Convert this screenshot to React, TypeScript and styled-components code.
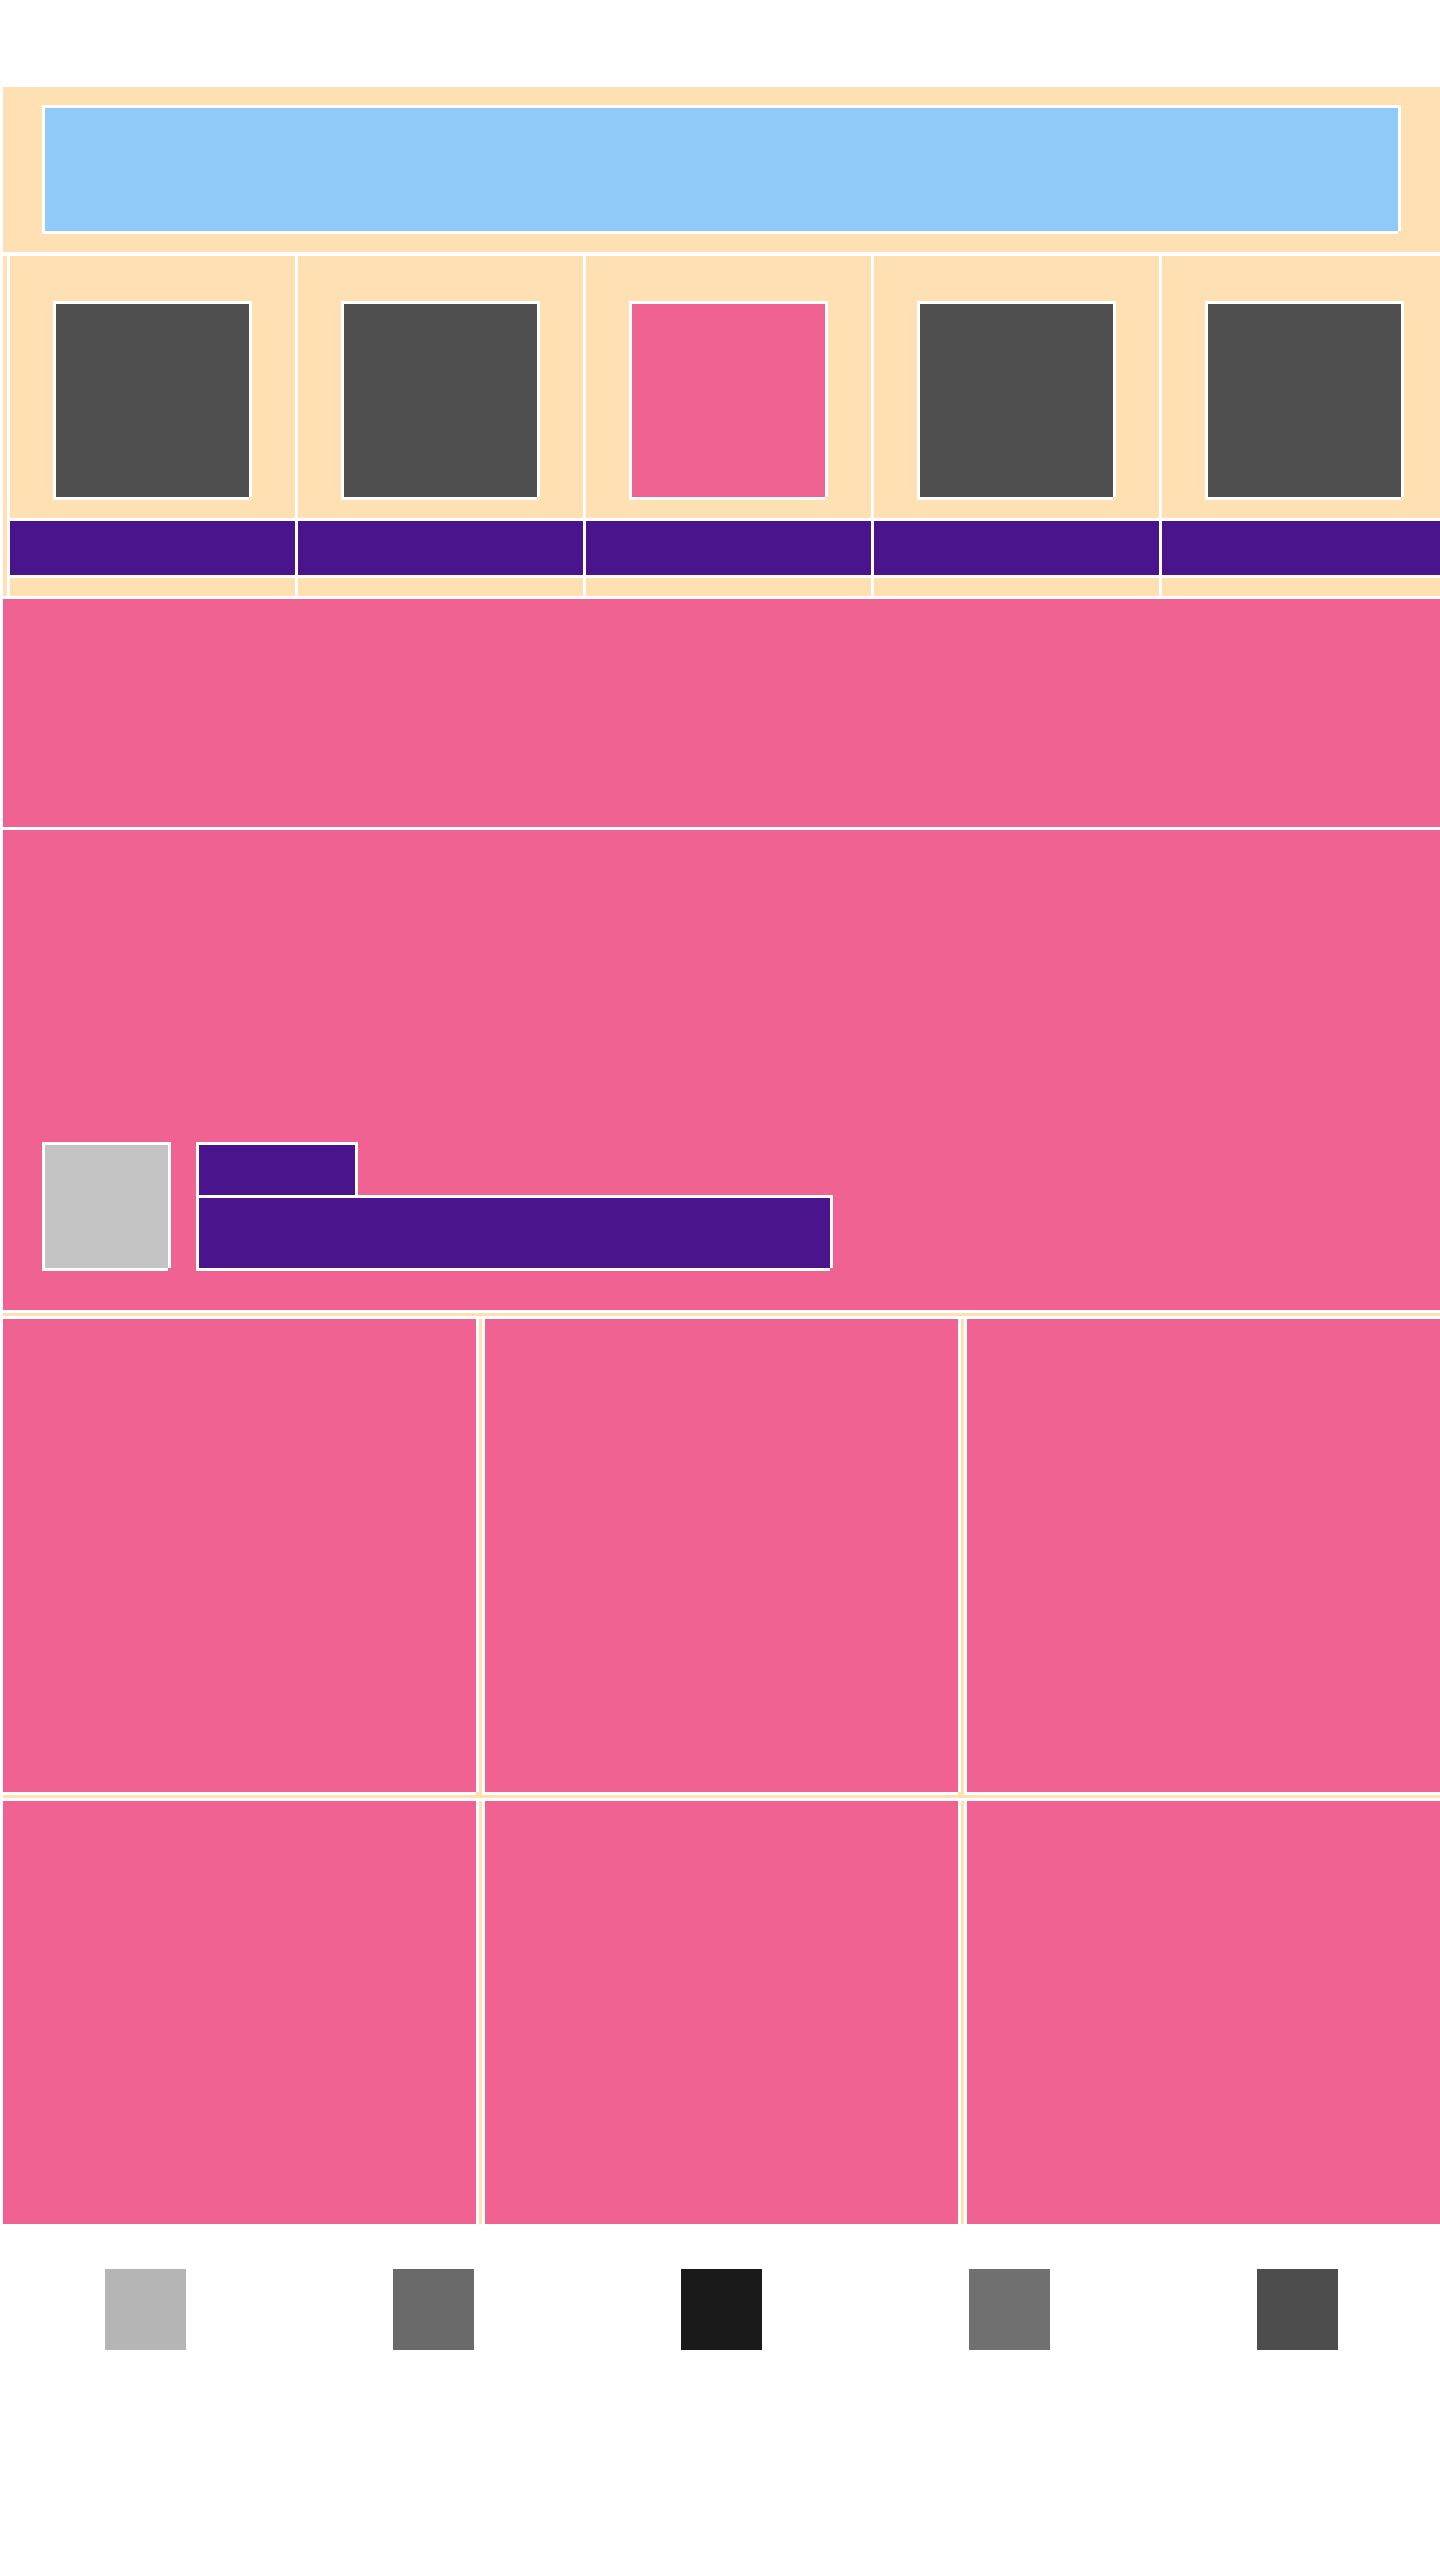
import styled, { createGlobalStyle, css } from 'styled-components';

const BEIGE = '#ffe0b2';
const PINK = '#f06292';
const PURPLE = '#4a148c';

const GlobalStyle = createGlobalStyle`
  html, body {
    margin: 0;
    background: #fff;
  }
`;

// white edge on every side, bottom right corner stays open
const edge = css`
  box-shadow:
    -3px -3px 0 #fff,
    3px -3px 0 #fff,
    -3px 3px 0 #fff,
    3px 0 0 #fff,
    0 3px 0 #fff;
`;

const tileColors = ['#4f4f4f', '#4f4f4f', PINK, '#4f4f4f', '#4f4f4f'];
const swatchColors = ['#b5b5b5', '#6a6a6a', '#1a1a1a', '#707070', '#4d4d4d'];

export default function App() {
  return (
    <>
      <GlobalStyle />
      <Page>
        <Hero>
          <Banner />
        </Hero>

        <Carousel>
          {tileColors.map((color, idx) => (
            <Slide key={idx}>
              <Tile $color={color} />
              <SlideLabel />
            </Slide>
          ))}
        </Carousel>

        <Promo />

        <Feature>
          <Thumb />
          <FeatureText>
            <FeatureTitle />
            <FeatureBody />
          </FeatureText>
        </Feature>

        <CardGrid>
          {[0, 1].map((row) => (
            <CardRow key={row}>
              <Card />
              <Card />
              <Card />
            </CardRow>
          ))}
        </CardGrid>

        <Footer>
          {swatchColors.map((color) => (
            <Swatch key={color} $color={color} />
          ))}
        </Footer>
      </Page>
    </>
  );
}

const Page = styled.div`
  display: flex;
  flex-direction: column;
  box-sizing: border-box;
  width: 1440px;
  min-height: 2560px;
  padding: 87px 0 0 3px;
  overflow: hidden;
`;

const Hero = styled.section`
  box-sizing: border-box;
  height: 165px;
  padding: 21px 42px;
  background: ${BEIGE};
`;

const Banner = styled.div`
  height: 123px;
  background: #90caf9;
  ${edge}
`;

const Carousel = styled.section`
  display: flex;
  gap: 3px;
  box-sizing: border-box;
  height: 340px;
  margin-top: 4px;
  padding-left: 3px;
  border-left: 4px solid ${BEIGE};
  overflow: hidden;
`;

const Slide = styled.div`
  display: flex;
  flex: none;
  flex-direction: column;
  align-items: center;
  width: 285px;
  padding-top: 48px;
  background: ${BEIGE};
`;

const Tile = styled.div<{ $color: string }>`
  width: 193px;
  height: 193px;
  background: ${(p) => p.$color};
  ${edge}
`;

const SlideLabel = styled.div`
  align-self: stretch;
  height: 54px;
  margin-top: 24px;
  background: ${PURPLE};
  box-shadow: 0 -3px 0 #fff, 0 3px 0 #fff;
`;

const Promo = styled.section`
  height: 228px;
  margin-top: 3px;
  background: ${PINK};
`;

const Feature = styled.section`
  display: flex;
  gap: 31px;
  align-items: flex-end;
  box-sizing: border-box;
  height: 480px;
  margin-top: 3px;
  padding: 0 0 42px 42px;
  background: ${PINK};
`;

const Thumb = styled.div`
  width: 123px;
  height: 123px;
  background: #c4c4c4;
  ${edge}
`;

const FeatureText = styled.div`
  display: flex;
  flex-direction: column;
  gap: 3px;
`;

const FeatureTitle = styled.div`
  width: 156px;
  height: 50px;
  background: ${PURPLE};
  ${edge}
`;

const FeatureBody = styled.div`
  width: 631px;
  height: 70px;
  background: ${PURPLE};
  ${edge}
`;

const CardGrid = styled.section`
  display: flex;
  flex-direction: column;
  gap: 6px;
  box-sizing: border-box;
  height: 911px;
  margin-top: 3px;
  padding-top: 3px;
  background: ${BEIGE};
  overflow: hidden;
`;

const CardRow = styled.div`
  display: flex;
  flex: none;
  gap: 9px;
  border-top: 3px solid #fff;
`;

const Card = styled.div`
  flex: none;
  width: 473px;
  height: 473px;
  background: ${PINK};
  ${edge}
`;

const Footer = styled.footer`
  display: flex;
  gap: 207px;
  margin-top: 45px;
  padding-left: 102px;
`;

const Swatch = styled.div<{ $color: string }>`
  flex: none;
  width: 81px;
  height: 81px;
  background: ${(p) => p.$color};
`;
